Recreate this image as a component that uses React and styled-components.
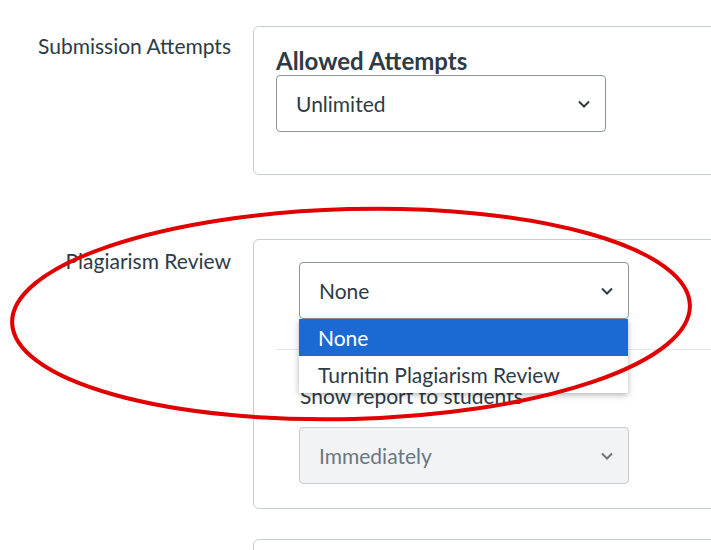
import React from "react";
import styled, { createGlobalStyle } from "styled-components";

const Global = createGlobalStyle`
  html, body { margin: 0; padding: 0; overflow: hidden; background: #fff; }
  body { font-family: Lato, "Liberation Sans", sans-serif; color: #2d3b45; }
`;

const Page = styled.div`
  position: relative;
  width: 711px;
  height: 550px;
  overflow: hidden;
  padding-top: 26px;
  box-sizing: border-box;
`;

const Row = styled.div`
  display: grid;
  grid-template-columns: 231px 1fr;
  column-gap: 22px;
  margin-bottom: ${p => p.gap || 0}px;
`;

const Label = styled.div`
  text-align: right;
  font-size: 21px;
  line-height: 24px;
  padding-top: ${p => p.top}px;
`;

const Card = styled.div`
  width: 520px;
  height: ${p => p.h}px;
  border: 1px solid #c7cdd1;
  border-radius: 6px;
  box-sizing: border-box;
  padding: ${p => p.pad};
`;

const Heading = styled.div`
  font-size: 24px;
  font-weight: 700;
  line-height: 26px;
  margin-bottom: 1px;
`;

const Select = styled.div`
  width: 330px;
  height: 57px;
  box-sizing: border-box;
  border: 1px solid #8b969e;
  border-radius: 4px;
  display: flex;
  align-items: center;
  justify-content: space-between;
  padding: 0 14px 0 19px;
  font-size: 21px;
  background: ${p => (p.disabled ? "#f2f3f4" : "#fff")};
  color: ${p => (p.disabled ? "#6b7780" : "#2d3b45")};
  border-color: ${p => (p.disabled ? "#c7cdd1" : "#8b969e")};
`;

const Divider = styled.div`
  height: 1px;
  background: #e4e7e9;
  margin: 30px 0 0 -23px;
`;

const SubLabel = styled.div`
  font-size: 21px;
  line-height: 24px;
  margin: 34px 0 19px 1px;
`;

const Menu = styled.div`
  position: absolute;
  left: 299px;
  top: 319px;
  width: 329px;
  background: #fff;
  box-shadow: 0 2px 6px rgba(0,0,0,0.3);
  font-size: 21px;
`;

const Option = styled.div`
  height: 37px;
  display: flex;
  align-items: center;
  padding-left: 19px;
  background: ${p => (p.active ? "#1b69d3" : "#fff")};
  color: ${p => (p.active ? "#fff" : "#2d3b45")};
`;

const Ellipse = styled.svg`
  position: absolute;
  left: 0;
  top: 0;
  pointer-events: none;
`;

const Chevron = () => (
  <svg width="14" height="10" viewBox="0 0 14 10">
    <path d="M2 2.5l5 5 5-5" fill="none" stroke="currentColor" strokeWidth="2" />
  </svg>
);

export default function App() {
  return (
    <Page>
      <Global />
      <Row gap={64}>
        <Label top={8}>Submission Attempts</Label>
        <Card h={149} pad="21px 22px">
          <Heading>Allowed Attempts</Heading>
          <Select>Unlimited<Chevron /></Select>
        </Card>
      </Row>
      <Row gap={30}>
        <Label top={10}>Plagiarism Review</Label>
        <Card h={270} pad="22px 22px 0 45px">
          <Select>None<Chevron /></Select>
          <Divider />
          <SubLabel>Show report to students</SubLabel>
          <Select disabled>Immediately<Chevron /></Select>
        </Card>
      </Row>
      <Row>
        <div />
        <Card h={60} />
      </Row>
      <Menu>
        <Option active>None</Option>
        <Option>Turnitin Plagiarism Review</Option>
      </Menu>
      <Ellipse width="711" height="550">
        <ellipse cx="351" cy="314" rx="339" ry="105" fill="none" stroke="#e00000" strokeWidth="4" transform="rotate(-1.5 351 314)" />
      </Ellipse>
    </Page>
  );
}
